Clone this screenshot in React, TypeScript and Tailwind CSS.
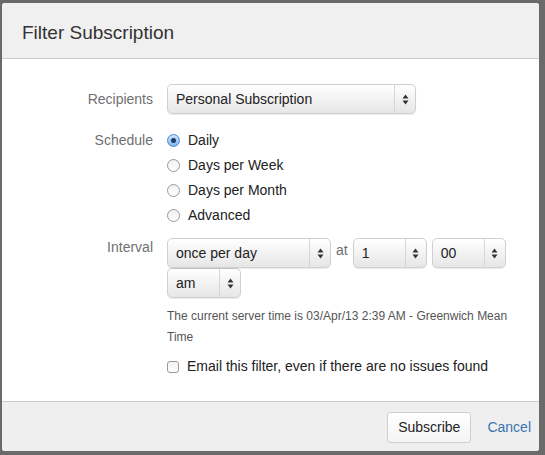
import React from 'react';

const Arrows = () => (
  <svg width="7" height="11" viewBox="0 0 7 11">
    <path d="M3.5 0.5 L6.5 4.5 L0.5 4.5 Z" fill="#333" />
    <path d="M3.5 10.5 L6.5 6.5 L0.5 6.5 Z" fill="#333" />
  </svg>
);

const Select = ({ value, className }: { value: string; className: string }) => (
  <div
    className={`flex h-[30px] items-stretch rounded-[5px] border border-[#d0d0d0] bg-gradient-to-b from-white to-[#e6e6e6] shadow-[0_1px_1px_rgba(0,0,0,0.08)] ${className}`}
  >
    <div className="flex flex-1 items-center pl-[8px] text-[14px] text-[#222]">{value}</div>
    <div className="flex w-[21px] items-center justify-center border-l border-[#d6d6d6]">
      <Arrows />
    </div>
  </div>
);

const Radio = ({ checked, label }: { checked?: boolean; label: string }) => (
  <div className="flex h-[25px] items-center gap-[8px]">
    {checked ? (
      <span className="flex h-[13px] w-[13px] items-center justify-center rounded-full border border-[#4a8ad0] bg-gradient-to-b from-[#cfe4fb] to-[#7fb4ef]">
        <span className="h-[5px] w-[5px] rounded-full bg-[#1c3c63]" />
      </span>
    ) : (
      <span className="h-[13px] w-[13px] rounded-full border border-[#9a9a9a] bg-gradient-to-b from-[#f0f0f0] to-white" />
    )}
    <span className="text-[14px] text-[#222]">{label}</span>
  </div>
);

const Row = ({
  label,
  children,
  className = '',
  labelClass = '',
}: {
  label: string;
  children: React.ReactNode;
  className?: string;
  labelClass?: string;
}) => (
  <div className={`flex ${className}`}>
    <div className={`w-[151px] shrink-0 text-right text-[14px] text-[#707070] ${labelClass}`}>{label}</div>
    <div className="ml-[14px] flex-1">{children}</div>
  </div>
);

export default function App() {
  return (
    <div className="h-[455px] w-[545px] bg-[#6a6a6a] pl-[2px] pt-[3px] font-['Liberation_Sans',Arial,sans-serif]">
      <div className="flex h-[448px] w-[537px] flex-col overflow-hidden rounded-[3px] bg-white">
        <div className="h-[56px] border-b border-[#cccccc] bg-[#f0f0f0] pl-[20px] pt-[19px]">
          <h1 className="text-[19px] leading-[22px] text-[#333]">Filter Subscription</h1>
        </div>

        <div className="flex-1 pt-[25px]">
          <Row label="Recipients" className="items-center">
            <Select value="Personal Subscription" className="w-[249px]" />
          </Row>

          <Row label="Schedule" className="mt-[16px] items-start">
            <div className="-mt-[2px]">
              <Radio checked label="Daily" />
              <Radio label="Days per Week" />
              <Radio label="Days per Month" />
              <Radio label="Advanced" />
            </div>
          </Row>

          <Row label="Interval" className="mt-[12px] items-start" labelClass="-mt-[3px]">
            <div className="-mt-[2px]">
              <div className="flex items-center">
                <Select value="once per day" className="w-[164px]" />
                <span className="mx-[5px] -mt-[5px] text-[14px] text-[#707070]">at</span>
                <Select value="1" className="w-[74px]" />
                <Select value="00" className="ml-[5px] w-[74px]" />
              </div>
              <Select value="am" className="w-[74px]" />
              <p className="mt-[8px] w-[360px] text-[12px] leading-[21px] text-[#555]">
                The current server time is 03/Apr/13 2:39 AM - Greenwich Mean Time
              </p>
              <div className="mt-[8px] flex items-center gap-[8px]">
                <span className="h-[12px] w-[12px] rounded-[3px] border border-[#9a9a9a] bg-gradient-to-b from-[#f2f2f2] to-white" />
                <span className="text-[14px] text-[#222]">Email this filter, even if there are no issues found</span>
              </div>
            </div>
          </Row>
        </div>

        <div className="flex h-[50px] items-center justify-end gap-[16px] border-t border-[#cccccc] bg-[#efefef] pr-[8px] pt-[2px]">
          <button className="h-[31px] rounded-[3px] border border-[#cfcfcf] bg-gradient-to-b from-white to-[#f4f4f4] px-[10px] text-[14px] text-[#222]">
            Subscribe
          </button>
          <a className="text-[14px] text-[#3b73af]">Cancel</a>
        </div>
      </div>
    </div>
  );
}
